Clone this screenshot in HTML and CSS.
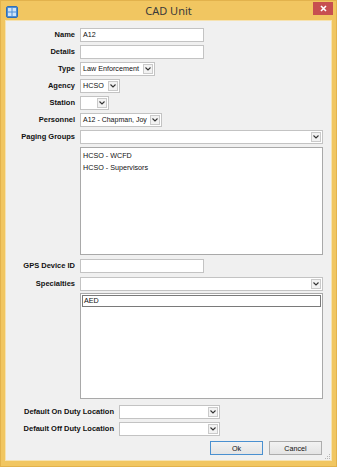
FILE: index.html
```html
<!DOCTYPE html>
<html lang="en">
<head>
  <meta charset="UTF-8" />
  <meta name="viewport" content="width=device-width, initial-scale=1.0" />
  <title>CAD Unit</title>
  <link rel="stylesheet" href="styles.css">
</head>
<body>
  <div class="window">
    <div class="titlebar">
      <div class="app-icon">
        <svg width="12" height="12" viewBox="0 0 12 12">
          <rect x="0.5" y="0.5" width="11" height="11" rx="1.5" fill="#4d8fd6" stroke="#2f6fb8"/>
          <rect x="2" y="2" width="3.5" height="3.5" fill="#cfe3f7"/>
          <rect x="6.5" y="2" width="3.5" height="3.5" fill="#cfe3f7"/>
          <rect x="2" y="6.5" width="3.5" height="3.5" fill="#cfe3f7"/>
          <rect x="6.5" y="6.5" width="3.5" height="3.5" fill="#cfe3f7"/>
        </svg>
      </div>
      <div class="title">CAD Unit</div>
      <div class="controls">
        <div class="close-btn">
          <svg width="7" height="7" viewBox="0 0 7 7">
            <path d="M1 1 L6 6 M6 1 L1 6" stroke="#fff" stroke-width="1.6"/>
          </svg>
        </div>
      </div>
    </div>

    <div class="client">
      <div class="form">
        <label>Name</label>
        <div class="textbox w-text">A12</div>

        <label>Details</label>
        <div class="textbox w-text"></div>

        <label>Type</label>
        <div class="combo w-type"><span class="value">Law Enforcement</span><span class="arrow"><svg width="6" height="4" viewBox="0 0 6 4"><path d="M0.5 0.5 L3 3 L5.5 0.5" fill="none" stroke="#333" stroke-width="1.1"/></svg></span></div>

        <label>Agency</label>
        <div class="combo w-agency"><span class="value">HCSO</span><span class="arrow"><svg width="6" height="4" viewBox="0 0 6 4"><path d="M0.5 0.5 L3 3 L5.5 0.5" fill="none" stroke="#333" stroke-width="1.1"/></svg></span></div>

        <label>Station</label>
        <div class="combo w-station"><span class="value"></span><span class="arrow"><svg width="6" height="4" viewBox="0 0 6 4"><path d="M0.5 0.5 L3 3 L5.5 0.5" fill="none" stroke="#333" stroke-width="1.1"/></svg></span></div>

        <label>Personnel</label>
        <div class="combo w-personnel"><span class="value">A12 - Chapman, Joy</span><span class="arrow"><svg width="6" height="4" viewBox="0 0 6 4"><path d="M0.5 0.5 L3 3 L5.5 0.5" fill="none" stroke="#333" stroke-width="1.1"/></svg></span></div>

        <label>Paging Groups</label>
        <div class="combo w-full"><span class="value"></span><span class="arrow"><svg width="6" height="4" viewBox="0 0 6 4"><path d="M0.5 0.5 L3 3 L5.5 0.5" fill="none" stroke="#333" stroke-width="1.1"/></svg></span></div>

        <span></span>
        <div class="listbox list-paging">
          <div class="item">HCSO - WCFD</div>
          <div class="item">HCSO - Supervisors</div>
        </div>

        <label class="gap-top">GPS Device ID</label>
        <div class="textbox w-text gap-top"></div>

        <label class="gap-top">Specialties</label>
        <div class="combo w-full gap-top"><span class="value"></span><span class="arrow"><svg width="6" height="4" viewBox="0 0 6 4"><path d="M0.5 0.5 L3 3 L5.5 0.5" fill="none" stroke="#333" stroke-width="1.1"/></svg></span></div>

        <span></span>
        <div class="listbox list-specialties">
          <div class="item focused">AED</div>
        </div>
      </div>

      <div class="form form-wide">
        <label>Default On Duty Location</label>
        <div class="combo w-location"><span class="value"></span><span class="arrow"><svg width="6" height="4" viewBox="0 0 6 4"><path d="M0.5 0.5 L3 3 L5.5 0.5" fill="none" stroke="#333" stroke-width="1.1"/></svg></span></div>

        <label>Default Off Duty Location</label>
        <div class="combo w-location"><span class="value"></span><span class="arrow"><svg width="6" height="4" viewBox="0 0 6 4"><path d="M0.5 0.5 L3 3 L5.5 0.5" fill="none" stroke="#333" stroke-width="1.1"/></svg></span></div>
      </div>

      <div class="buttons">
        <button class="btn btn-default">Ok</button>
        <button class="btn">Cancel</button>
      </div>

      <svg class="grip" width="7" height="7" viewBox="0 0 7 7">
        <rect x="5" y="1" width="1" height="1" fill="#b5b5b5"/>
        <rect x="3" y="3" width="1" height="1" fill="#b5b5b5"/>
        <rect x="5" y="3" width="1" height="1" fill="#b5b5b5"/>
        <rect x="1" y="5" width="1" height="1" fill="#b5b5b5"/>
        <rect x="3" y="5" width="1" height="1" fill="#b5b5b5"/>
        <rect x="5" y="5" width="1" height="1" fill="#b5b5b5"/>
      </svg>
    </div>
  </div>
</body>
</html>
```

FILE: styles.css
```css
body {
  margin: 0;
  background: #f1c661;
  font-family: "Liberation Sans", Arial, sans-serif;
  color: #1a1a1a;
}

.window {
  width: 337px;
  height: 467px;
  background: #f1c661;
  box-sizing: border-box;
  border: 1px solid #e2b24c;
  display: flex;
  flex-direction: column;
}

.titlebar {
  height: 19px;
  display: grid;
  grid-template-columns: 1fr auto 1fr;
  align-items: start;
}

.app-icon {
  padding: 3px 0 0 5px;
  height: 12px;
}

.title {
  font-family: "Noto Sans", sans-serif;
  font-size: 11px;
  color: #3a3a3a;
  padding-top: 2px;
  line-height: 15px;
}

.controls {
  display: flex;
  justify-content: flex-end;
  padding-right: 3px;
}

.close-btn {
  width: 20px;
  height: 13px;
  margin-top: 1px;
  background: #c75050;
  display: flex;
  align-items: center;
  justify-content: center;
}

.client {
  position: relative;
  flex: 1;
  margin: 0 4px 5px 4px;
  background: #f0f0f0;
  border: 1px solid #f6e2b0;
  padding: 7px 8px 0 0;
}

.form {
  display: grid;
  grid-template-columns: 69px 1fr;
  column-gap: 5px;
  row-gap: 3px;
}

.form-wide {
  grid-template-columns: 108px 1fr;
  margin-top: 6px;
}

label {
  font-weight: bold;
  font-size: 7.5px;
  text-align: right;
  line-height: 14px;
  white-space: nowrap;
  color: #111;
}

.textbox,
.combo {
  box-sizing: border-box;
  height: 14px;
  background: #fff;
  border: 1px solid #c3c3c3;
  font-size: 7.2px;
  line-height: 12px;
  color: #111;
  justify-self: start;
}

.textbox {
  padding-left: 2px;
}

.combo {
  display: flex;
}

.combo .value {
  flex: 1;
  padding-left: 2px;
  white-space: nowrap;
  overflow: hidden;
}

.combo .arrow {
  box-sizing: border-box;
  width: 10px;
  margin: 1px;
  border: 1px solid #cacaca;
  background: #f2f2f2;
  display: flex;
  align-items: center;
  justify-content: center;
}

.w-text { width: 124px; }
.w-type { width: 75px; }
.w-agency { width: 40px; }
.w-station { width: 29px; }
.w-personnel { width: 82px; font-size: 7px; }
.w-full { width: 100%; justify-self: stretch; }
.w-location { width: 101px; }

.listbox {
  box-sizing: border-box;
  background: #fff;
  border: 1px solid #a9a9a9;
  font-size: 7.2px;
  color: #111;
  padding: 1px;
}

.list-paging {
  height: 108px;
  padding-top: 2px;
}

.list-specialties {
  height: 106px;
  margin-top: -1px;
}

.item {
  line-height: 12px;
  padding-left: 1px;
}

.item.focused {
  border: 1px solid #7a7a7a;
  line-height: 10px;
  height: 10px;
}

.gap-top {
  margin-top: 1px;
}

.buttons {
  display: flex;
  justify-content: flex-end;
  gap: 6px;
  margin-top: 5px;
  padding-right: 1px;
}

.btn {
  box-sizing: border-box;
  width: 53px;
  height: 14px;
  padding: 0;
  font-family: "Liberation Sans", Arial, sans-serif;
  font-size: 7.2px;
  color: #111;
  background: linear-gradient(#f2f2f2, #e4e4e4);
  border: 1px solid #adadad;
}

.btn-default {
  border-color: #4a90d0;
}

.grip {
  position: absolute;
  right: 0;
  bottom: 0;
}
```
